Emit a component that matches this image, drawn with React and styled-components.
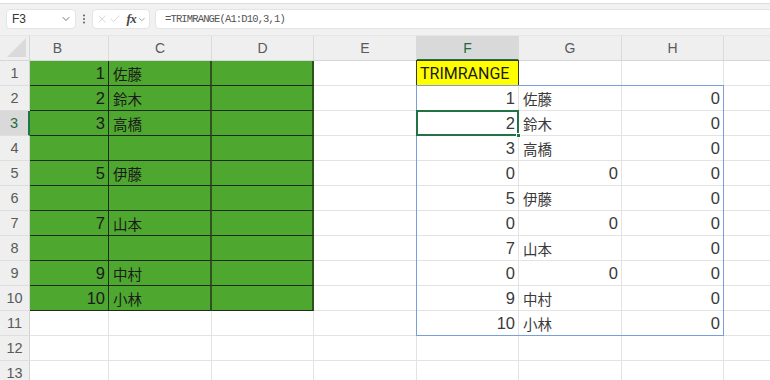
import React from "react";
import styled, { createGlobalStyle, css } from "styled-components";
import { X, Check, ChevronDown, EllipsisVertical } from "lucide-react";

const GlobalStyle = createGlobalStyle`
  html, body {
    margin: 0;
    padding: 0;
    background: #ffffff;
    overflow: hidden;
  }
  body {
    font-family: "Liberation Sans", "Noto Sans CJK JP", sans-serif;
  }
`;

const LATIN = `"Liberation Sans Narrow", "Liberation Sans", "Noto Sans CJK JP", sans-serif`;
const CJK = `"Noto Sans CJK JP", sans-serif`;

const columns = ["B", "C", "D", "E", "F", "G", "H", "I"];

const left = [
  [1, "佐藤"],
  [2, "鈴木"],
  [3, "高橋"],
  [null, null],
  [5, "伊藤"],
  [null, null],
  [7, "山本"],
  [null, null],
  [9, "中村"],
  [10, "小林"],
];

const spill = [
  [1, "佐藤", 0],
  [2, "鈴木", 0],
  [3, "高橋", 0],
  [0, 0, 0],
  [5, "伊藤", 0],
  [0, 0, 0],
  [7, "山本", 0],
  [0, 0, 0],
  [9, "中村", 0],
  [10, "小林", 0],
];

const renderValue = (v) => {
  if (v === null || v === undefined) return { text: "", kind: "empty" };
  if (typeof v === "number") return { text: String(v), kind: "num" };
  return { text: v, kind: "jp" };
};

const App = () => {
  const rows = Array.from({ length: 13 }, (_, i) => i + 1);

  return (
    <>
      <GlobalStyle />
      <Page>
        <RibbonEdge />
        <FormulaBar>
          <NameBox>
            <span>F3</span>
            <ChevronDown size={12} strokeWidth={1.6} color="#555" />
          </NameBox>
          <Grip>
            <EllipsisVertical size={12} strokeWidth={2.2} color="#666" />
          </Grip>
          <FxBox>
            <X size={14} strokeWidth={1.3} color="#c2c2c2" />
            <Check size={14} strokeWidth={1.3} color="#c2c2c2" />
            <Fx>fx</Fx>
            <ChevronDown size={11} strokeWidth={1.6} color="#777" />
          </FxBox>
          <FormulaInput>=TRIMRANGE(A1:D10,3,1)</FormulaInput>
        </FormulaBar>

        <Sheet>
          <Corner>
            <svg width="20" height="20" viewBox="0 0 20 20">
              <polygon points="19,0 19,19 0,19" fill="#dadada" />
            </svg>
          </Corner>
          {columns.map((c, ci) => (
            <ColHeader key={c} $col={ci + 2} $active={c === "F"} $first={c === "B"}>
              {c}
            </ColHeader>
          ))}

          {rows.map((r) => {
            const cells = [];
            cells.push(
              <RowHeader key={`h${r}`} $row={r + 1} $active={r === 3}>
                {r}
              </RowHeader>
            );
            columns.forEach((c, ci) => {
              let content = "";
              let kind = "empty";
              let fill = null;
              if (r <= 10 && (c === "B" || c === "C" || c === "D")) {
                fill = c;
                if (c === "B") ({ text: content, kind } = renderValue(left[r - 1][0]));
                if (c === "C") ({ text: content, kind } = renderValue(left[r - 1][1]));
              }
              if (r === 1 && c === "F") {
                fill = "yellow";
                content = "TRIMRANGE";
                kind = "label";
              }
              if (r >= 2 && r <= 11 && ["F", "G", "H"].includes(c)) {
                const idx = ["F", "G", "H"].indexOf(c);
                ({ text: content, kind } = renderValue(spill[r - 2][idx]));
              }
              cells.push(
                <Cell
                  key={`${c}${r}`}
                  $row={r + 1}
                  $col={ci + 2}
                  $fill={fill}
                  $kind={kind}
                >
                  {content}
                </Cell>
              );
            });
            return cells;
          })}

          <SpillOutline />
          <ActiveCell />
        </Sheet>
      </Page>
    </>
  );
};

const Page = styled.div`
  width: 770px;
  height: 380px;
  overflow: hidden;
  background: #ffffff;
`;

const RibbonEdge = styled.div`
  height: 3px;
  background: #ffffff;
  border-bottom: 1px solid #dedede;
`;

const FormulaBar = styled.div`
  height: 31px;
  background: #f1f1f1;
  display: flex;
  align-items: flex-start;
  padding: 5px 0 0 6px;
  box-sizing: border-box;
  font-family: "Liberation Sans", sans-serif;
`;

const boxBase = css`
  height: 20px;
  background: #ffffff;
  border: 1px solid #e4e4e4;
  border-radius: 4px;
  box-sizing: border-box;
  display: flex;
  align-items: center;
`;

const NameBox = styled.div`
  ${boxBase};
  width: 70px;
  padding: 0 3px 0 5px;
  justify-content: space-between;
  font-size: 12px;
  color: #333;
`;

const Grip = styled.div`
  width: 16px;
  height: 20px;
  display: flex;
  align-items: center;
  justify-content: center;
`;

const FxBox = styled.div`
  ${boxBase};
  width: 58px;
  padding: 0 2px 0 3px;
  gap: 1px;
`;

const Fx = styled.span`
  font-family: "Liberation Serif", serif;
  font-style: italic;
  font-weight: bold;
  font-size: 13px;
  color: #444;
  margin-left: 4px;
  letter-spacing: -0.5px;
`;

const FormulaInput = styled.div`
  ${boxBase};
  flex: 1;
  margin-left: 5px;
  margin-right: -10px;
  padding-left: 9px;
  font-family: "Liberation Mono", monospace;
  font-size: 10.5px;
  letter-spacing: -0.85px;
  color: #555;
`;

const Sheet = styled.div`
  display: grid;
  grid-template-columns: 30px 79px 103px 102px 103px 102px 103px 102px 102px;
  grid-template-rows: repeat(14, 25px);
  background: #ffffff;
  border-top: 1px solid #e6e6e6;
`;

const Corner = styled.div`
  grid-row: 1;
  grid-column: 1;
  background: #efefef;
  border-right: 1px solid #d6d6d6;
  border-bottom: 1px solid #d6d6d6;
  box-sizing: border-box;
  display: flex;
  align-items: flex-end;
  justify-content: flex-end;
  padding: 0 2px 2px 0;
`;

const ColHeader = styled.div`
  grid-row: 1;
  grid-column: ${(p) => p.$col};
  background: ${(p) => (p.$active ? "#d9d9d9" : "#efefef")};
  color: ${(p) => (p.$active ? "#1e6b41" : "#5a5a5a")};
  border-right: 1px solid #dadada;
  border-bottom: ${(p) => (p.$active ? "2px solid #217346" : "1px solid #d6d6d6")};
  box-sizing: border-box;
  display: flex;
  align-items: center;
  justify-content: center;
  padding-right: ${(p) => (p.$first ? "23px" : "0")};
  font-family: "Liberation Sans", sans-serif;
  font-size: 14px;
`;

const RowHeader = styled.div`
  grid-row: ${(p) => p.$row};
  grid-column: 1;
  background: ${(p) => (p.$active ? "#d9d9d9" : "#efefef")};
  color: ${(p) => (p.$active ? "#1e6b41" : "#5a5a5a")};
  border-right: ${(p) => (p.$active ? "2px solid #217346" : "1px solid #d2d2d2")};
  border-bottom: 1px solid #dedede;
  box-sizing: border-box;
  display: flex;
  align-items: center;
  justify-content: center;
  font-family: "Liberation Sans", sans-serif;
  font-size: 14.5px;
`;

const fills = {
  B: css`
    background: #4ea72e;
    border-right: 1px solid #1d2b18;
    border-bottom: 1px solid #1d2b18;
    color: #1b1b1b;
  `,
  C: css`
    background: #4ea72e;
    border-right: 2px solid #2c5220;
    border-bottom: 1px solid #1d2b18;
    color: #1b1b1b;
  `,
  D: css`
    background: #4ea72e;
    border-right: 2px solid #2c5220;
    border-bottom: 1px solid #1d2b18;
    color: #1b1b1b;
  `,
  yellow: css`
    background: #ffff00;
    border: 1px solid #3b3b1a;
    margin: -1px 0 0 -1px;
    color: #1b1b1b;
  `,
};

const Cell = styled.div`
  grid-row: ${(p) => p.$row};
  grid-column: ${(p) => p.$col};
  box-sizing: border-box;
  border-right: 1px solid #e3e3e3;
  border-bottom: 1px solid #e3e3e3;
  display: flex;
  align-items: center;
  white-space: nowrap;
  overflow: hidden;
  color: #3a3a3a;
  ${(p) => p.$kind === "num" && css`
    justify-content: flex-end;
    padding-right: 3px;
    font-family: ${LATIN};
    font-size: 16.5px;
  `}
  ${(p) => p.$kind === "jp" && css`
    justify-content: flex-start;
    padding-left: 4px;
    font-family: ${CJK};
    font-size: 14.5px;
  `}
  ${(p) => p.$kind === "label" && css`
    padding-left: 3px;
    font-family: "Roboto", "Liberation Sans", sans-serif;
    font-size: 16px;
  `}
  ${(p) => p.$fill && fills[p.$fill]};
`;

const SpillOutline = styled.div`
  grid-column: 6 / 9;
  grid-row: 3 / 13;
  margin: -1px 0 0 -1px;
  border: 1px solid #7a9edb;
  pointer-events: none;
`;

const ActiveCell = styled.div`
  grid-column: 6 / 7;
  grid-row: 4 / 5;
  margin: -1px 0 0 -1px;
  border: 2px solid #217346;
  position: relative;
  pointer-events: none;

  &::after {
    content: "";
    position: absolute;
    right: -4px;
    bottom: -4px;
    width: 5px;
    height: 5px;
    background: #217346;
    border: 1px solid #ffffff;
    box-sizing: border-box;
  }
`;

export default App;
